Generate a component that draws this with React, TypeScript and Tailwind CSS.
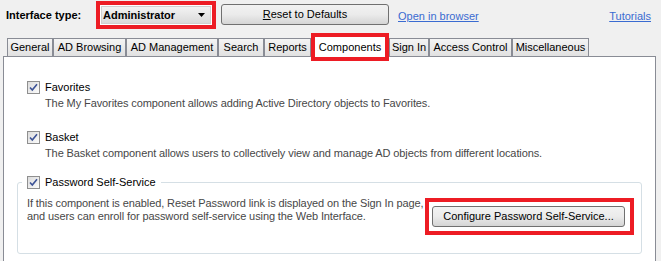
import React from 'react'

const tabs = [
  { label: 'General', w: 'w-[46px]' },
  { label: 'AD Browsing', w: 'w-[73px]' },
  { label: 'AD Management', w: 'w-[92px]' },
  { label: 'Search', w: 'w-[46px]' },
  { label: 'Reports', w: 'w-[47px]' },
  { label: 'Components', w: 'w-[70px]', active: true },
  { label: 'Sign In', w: 'w-[40px]' },
  { label: 'Access Control', w: 'w-[83px]' },
  { label: 'Miscellaneous', w: 'w-[77px]' },
]

function CheckBox() {
  return (
    <span className="inline-flex h-[13px] w-[13px] shrink-0 items-center justify-center border border-[#8f8f8f] bg-gradient-to-br from-[#dcdcdc] to-[#fbfbfb]">
      <svg width="9" height="9" viewBox="0 0 9 9" aria-hidden="true">
        <path d="M1 4.5 L3.3 7 L8 1.2" fill="none" stroke="#3c5296" strokeWidth="1.6" />
      </svg>
    </span>
  )
}

function Option({ title, text }: { title: string; text: string }) {
  return (
    <div className="flex flex-col">
      <div className="flex h-[13px] items-center gap-[5px]">
        <CheckBox />
        <span className="text-black">{title}</span>
      </div>
      <p className="mt-[3px] pl-[18px] tracking-[-0.1px] text-[#474747]">{text}</p>
    </div>
  )
}

export default function App() {
  return (
    <div className="h-[261px] w-[661px] overflow-hidden bg-[#f0f0f0] font-['Liberation_Sans',Arial,sans-serif] text-[11px] leading-[13px] text-black">
      {/* top bar */}
      <div className="flex h-[37px] items-start pt-[1px]">
        <span className="ml-[6px] mt-[8px] w-[90px] font-bold">Interface type:</span>
        <div className="flex h-[28px] w-[120px] items-center border-4 border-[#ed1c24] bg-white px-[1px]">
          <div className="flex h-[18px] flex-1 items-center justify-between border border-[#d0d0d0] bg-gradient-to-b from-[#f3f3f3] to-[#dadada] pl-[1px] pr-[5px]">
            <span className="font-bold">Administrator</span>
            <svg width="7" height="4" viewBox="0 0 7 4" aria-hidden="true">
              <path d="M0 0 H7 L3.5 4 Z" fill="#000" />
            </svg>
          </div>
        </div>
        <button className="ml-[5px] mt-[3px] flex h-[21px] w-[168px] items-center justify-center rounded-[3px] border border-[#707070] bg-gradient-to-b from-[#f2f2f2] via-[#ebebeb] to-[#d5d5d5]">
          <span>
            <span className="underline">R</span>eset to Defaults
          </span>
        </button>
        <a className="ml-[9px] mt-[9px] text-[#3a6bd1] underline">Open in browser</a>
        <a className="ml-auto mr-[10px] mt-[9px] text-[#3a6bd1] underline">Tutorials</a>
      </div>

      {/* tab strip */}
      <div className="flex h-[19px] items-end pl-[7px]">
        {tabs.map((t) =>
          t.active ? (
            <div
              key={t.label}
              className={`${t.w} relative z-10 mx-[4px] mb-[-1px] flex h-[20px] items-center justify-center bg-white outline-4 outline-[#ed1c24]`}
            >
              {t.label}
            </div>
          ) : (
            <div
              key={t.label}
              className={`${t.w} flex h-[18px] items-center justify-center border border-b-0 border-[#898c95] bg-gradient-to-b from-[#f4f4f4] to-[#e1e1e1]`}
            >
              {t.label}
            </div>
          ),
        )}
      </div>

      {/* panel */}
      <div className="ml-[3px] h-[220px] w-[653px] border border-[#898c95] bg-white pl-[23px] pt-[24px]">
        <div className="flex flex-col gap-[21px]">
          <Option
            title="Favorites"
            text="The My Favorites component allows adding Active Directory objects to Favorites."
          />
          <Option
            title="Basket"
            text="The Basket component allows users to collectively view and manage AD objects from different locations."
          />
        </div>

        <div className="relative ml-[-10px] mt-[22px] h-[72px] w-[625px] rounded-[3px] border border-[#d5dfe5]">
          <div className="absolute left-[4px] top-[-7px] flex h-[13px] items-center gap-[5px] bg-white px-[5px]">
            <CheckBox />
            <span>Password Self-Service</span>
          </div>
          <div className="flex items-start pl-[9px] pt-[14px]">
            <p className="w-[398px] whitespace-nowrap tracking-[-0.1px] text-[#474747]">
              If this component is enabled, Reset Password link is displayed on the Sign In page,
              <br />
              and users can enroll for password self-service using the Web Interface.
            </p>
            <div className="mt-[1px] border-4 border-[#ed1c24] bg-white pb-[4px] pl-[3px] pr-[5px] pt-[4px]">
              <button className="flex h-[21px] w-[193px] items-center justify-center rounded-[3px] border border-[#707070] bg-gradient-to-b from-[#f2f2f2] via-[#ebebeb] to-[#d5d5d5]">
                Configure Password Self-Service...
              </button>
            </div>
          </div>
        </div>
      </div>
    </div>
  )
}
